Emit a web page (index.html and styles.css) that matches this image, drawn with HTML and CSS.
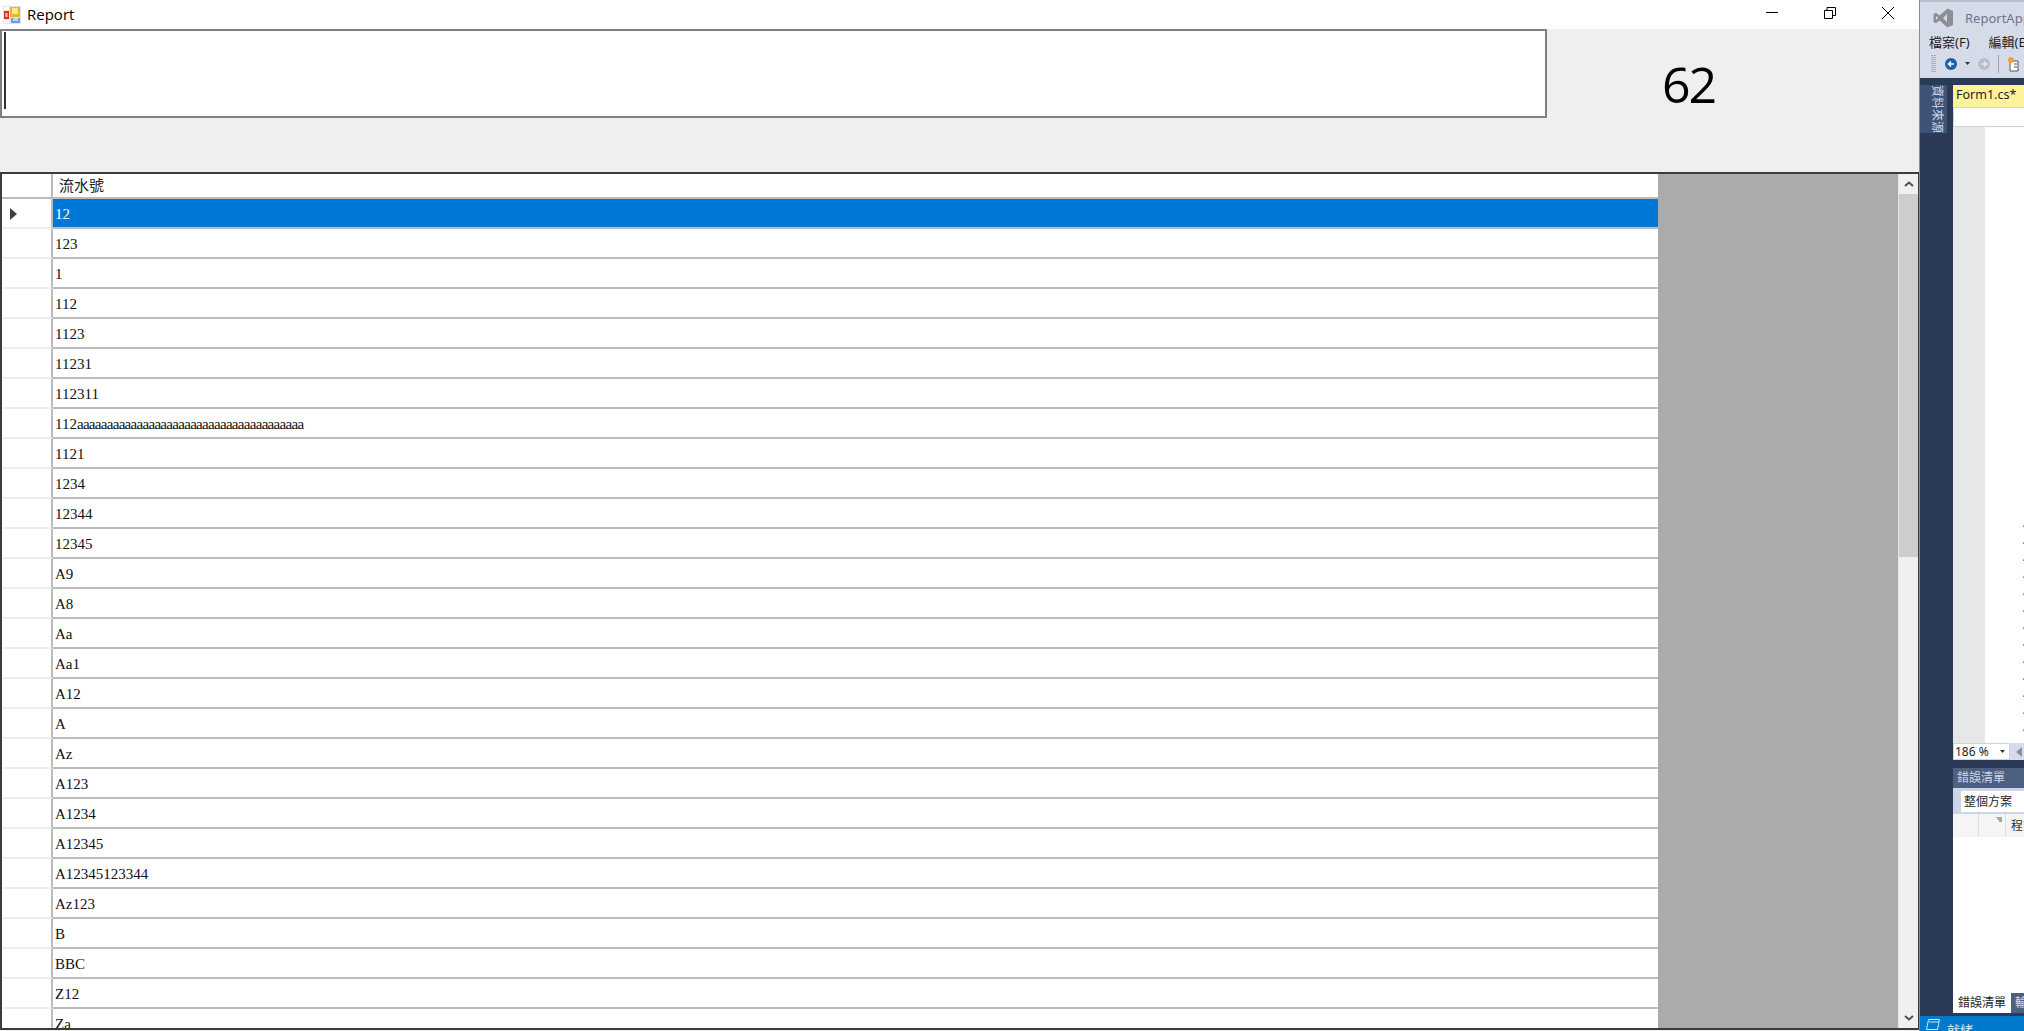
FILE: index.html
```html
<!DOCTYPE html>
<html lang="zh-Hant">
<head>
<meta charset="utf-8">
<title>Report</title>
<link rel="stylesheet" href="styles.css">
</head>
<body>
<div class="form">
  <header class="titlebar">
    <svg class="appicon" viewBox="0 0 18 18" width="18" height="18">
      <rect width="18" height="18" fill="#e4e4e4"/>
      <rect x="1" y="1" width="5" height="3" fill="#fff"/>
      <rect x="1" y="5" width="5" height="8" fill="#d8312c"/>
      <rect x="2.5" y="7" width="2" height="4" fill="#f6c9c0"/>
      <rect x="1" y="14" width="2" height="3" fill="#fff"/>
      <rect x="4" y="14" width="2" height="3" fill="#fff"/>
      <rect x="7" y="1" width="10" height="10" fill="#f0b323"/>
      <rect x="9" y="2" width="6" height="6" fill="#fbe58a"/>
      <rect x="8" y="12" width="9" height="5" fill="#6f9fe0"/>
      <rect x="10" y="12" width="5" height="3" fill="#bcd4f4"/>
    </svg>
    <span class="title">Report</span>
    <div class="winbtns">
      <svg viewBox="0 0 12 12" width="12" height="12"><path d="M0 5.5h12" stroke="#000" fill="none"/></svg>
      <svg viewBox="0 0 12 12" width="12" height="12"><path d="M0.5 3.5h8v8h-8zM3 3.5V0.5h8.5v8H8.5" stroke="#000" fill="none"/></svg>
      <svg viewBox="0 0 12 12" width="12" height="12"><path d="M0 0l12 12M12 0L0 12" stroke="#000" fill="none"/></svg>
    </div>
  </header>
  <section class="top">
    <div class="textbox"><span class="caret"></span></div>
    <div class="count">62</div>
  </section>
  <section class="grid">
    <div class="table">
      <div class="row head">
        <div class="rowhead"></div>
        <div class="cell headcell">流水號</div>
      </div>
      <div class="row selected">
        <div class="rowhead"><svg class="current" viewBox="0 0 7 12" width="7" height="12"><path d="M0 0l7 6-7 6z" fill="#404040"/></svg></div>
        <div class="cell">12</div>
      </div>
      <div class="row"><div class="rowhead"></div><div class="cell">123</div></div>
      <div class="row"><div class="rowhead"></div><div class="cell">1</div></div>
      <div class="row"><div class="rowhead"></div><div class="cell">112</div></div>
      <div class="row"><div class="rowhead"></div><div class="cell">1123</div></div>
      <div class="row"><div class="rowhead"></div><div class="cell">11231</div></div>
      <div class="row"><div class="rowhead"></div><div class="cell">112311</div></div>
      <div class="row"><div class="rowhead"></div><div class="cell">112<span class="tight">aaaaaaaaaaaaaaaaaaaaaaaaaaaaaaaaaaaaaa</span></div></div>
      <div class="row"><div class="rowhead"></div><div class="cell">1121</div></div>
      <div class="row"><div class="rowhead"></div><div class="cell">1234</div></div>
      <div class="row"><div class="rowhead"></div><div class="cell">12344</div></div>
      <div class="row"><div class="rowhead"></div><div class="cell">12345</div></div>
      <div class="row"><div class="rowhead"></div><div class="cell">A9</div></div>
      <div class="row"><div class="rowhead"></div><div class="cell">A8</div></div>
      <div class="row"><div class="rowhead"></div><div class="cell">Aa</div></div>
      <div class="row"><div class="rowhead"></div><div class="cell">Aa1</div></div>
      <div class="row"><div class="rowhead"></div><div class="cell">A12</div></div>
      <div class="row"><div class="rowhead"></div><div class="cell">A</div></div>
      <div class="row"><div class="rowhead"></div><div class="cell">Az</div></div>
      <div class="row"><div class="rowhead"></div><div class="cell">A123</div></div>
      <div class="row"><div class="rowhead"></div><div class="cell">A1234</div></div>
      <div class="row"><div class="rowhead"></div><div class="cell">A12345</div></div>
      <div class="row"><div class="rowhead"></div><div class="cell">A12345123344</div></div>
      <div class="row"><div class="rowhead"></div><div class="cell">Az123</div></div>
      <div class="row"><div class="rowhead"></div><div class="cell">B</div></div>
      <div class="row"><div class="rowhead"></div><div class="cell">BBC</div></div>
      <div class="row"><div class="rowhead"></div><div class="cell">Z12</div></div>
      <div class="row"><div class="rowhead"></div><div class="cell">Za</div></div>
    </div>
    <div class="empty"></div>
    <div class="vscroll">
      <div class="sbtn"><svg viewBox="0 0 10 6" width="10" height="6"><path d="M1 5l4-3.5L9 5" stroke="#505050" stroke-width="2" fill="none"/></svg></div>
      <div class="thumb"></div>
      <div class="track"></div>
      <div class="sbtn"><svg viewBox="0 0 10 6" width="10" height="6"><path d="M1 1l4 3.5L9 1" stroke="#505050" stroke-width="2" fill="none"/></svg></div>
    </div>
  </section>
</div>
<aside class="vs">
  <div class="vstop">
    <div class="vstitle">
      <svg class="vslogo" viewBox="0 0 20 20" width="20" height="20">
        <path d="M14.5 0.5L20 3v14l-5.500 2.500-8-7L3 15.300 0.500 14V6L3 4.700l3.500 2.800zM3 8v4l2-2zM14 6l-4 4 4 4z" fill="#8d8f97"/>
      </svg>
      <span class="vsname">ReportApp</span>
    </div>
    <div class="vsmenu"><span>檔案(F)</span><span>編輯(E)</span></div>
    <div class="vstools">
      <span class="grip"></span>
      <svg viewBox="0 0 12 12" width="12" height="12"><circle cx="6" cy="6" r="6" fill="#1c5fa8"/><path d="M9 6H4M6 3.500L3.500 6 6 8.500" stroke="#fff" stroke-width="1.600" fill="none"/></svg>
      <svg viewBox="0 0 5 3" width="5" height="3"><path d="M0 0h5L2.500 3z" fill="#333"/></svg>
      <svg viewBox="0 0 12 12" width="12" height="12"><circle cx="6" cy="6" r="6" fill="#b9bec6"/><path d="M3 6h5M6 3.500L8.500 6 6 8.500" stroke="#e6e8ee" stroke-width="1.600" fill="none"/></svg>
      <span class="sep"></span>
      <svg viewBox="0 0 14 16" width="14" height="16"><path d="M3 5h8v10H3z" fill="#fff" stroke="#555"/><circle cx="4" cy="4" r="3" fill="#e8a33a"/><path d="M7 8h3M7 11h3" stroke="#555"/></svg>
    </div>
  </div>
  <div class="vsbody">
    <div class="toolstrip"><div class="vtab">資料來源</div></div>
    <div class="vsmain">
      <div class="doctab">Form1.cs*</div>
      <div class="navbar"></div>
      <div class="editor">
        <div class="gutter"></div>
        <div class="code">
          <div class="lines">
            <span>4</span><span>4</span><span>4</span><span>4</span><span>4</span><span>4</span><span>4</span><span>4</span><span>4</span><span>4</span><span>4</span><span>4</span><span>4</span>
          </div>
        </div>
      </div>
      <div class="zoombar">
        <div class="zoombox"><span>186 %</span><svg viewBox="0 0 5 3" width="5" height="3"><path d="M0 0h5L2.500 3z" fill="#333"/></svg></div>
        <svg class="hleft" viewBox="0 0 6 10" width="6" height="10"><path d="M6 0v10L0 5z" fill="#8a8f99"/></svg>
      </div>
      <div class="errpanel">
        <div class="errhead">錯誤清單</div>
        <div class="errfilter"><div class="errinput">整個方案</div></div>
        <div class="errcols">
          <div class="col1"></div>
          <div class="col2"><svg viewBox="0 0 6 5" width="6" height="5"><path d="M0 0h6M1.500 2h4.500M3 4h3" stroke="#555" fill="none"/></svg></div>
          <div class="col3">程式碼</div>
        </div>
        <div class="errlist"></div>
        <div class="errtabs"><div class="tabon">錯誤清單</div><div class="taboff">輸出</div></div>
      </div>
    </div>
  </div>
  <footer class="status">
    <svg viewBox="0 0 14 11" width="14" height="11"><path d="M2.500 0.500h11l-2 10h-11zM3 3h10" stroke="#cfe6f7" fill="none"/></svg>
    <span>就緒</span>
  </footer>
</aside>
</body>
</html>
```
FILE: styles.css
```css
* { box-sizing: border-box; }
html, body { margin: 0; height: 1031px; overflow: hidden; }
body { display: flex; width: 2024px; background: #efefef; font-family: "Noto Sans", "Noto Sans CJK TC", sans-serif; }

.form { width: 1920px; height: 1031px; display: flex; flex-direction: column; flex: none; background: #efefef; border-right: 1px solid #8c8c8c; padding-bottom: 1px; }
.titlebar { height: 29px; flex: none; background: #fff; display: flex; align-items: center; padding-left: 3px; }
.appicon { flex: none; }
.title { margin-left: 6px; font-size: 15px; line-height: 29px; color: #000; font-family: "Open Sans", sans-serif; }
.winbtns { margin-left: auto; display: flex; gap: 46px; margin-right: 25px; align-items: center; height: 29px; padding-bottom: 3px; }

.top { height: 143px; flex: none; display: flex; align-items: flex-start; }
.textbox { width: 1547px; height: 89px; background: #fff; border: 2px solid #808080; padding: 1px 2px; }
.caret { display: block; width: 2px; height: 77px; background: #333; }
.count { margin-left: 115px; margin-top: 20px; font-family: "Open Sans", sans-serif; font-size: 50px; line-height: 70px; letter-spacing: -2px; color: #000; }

.grid { flex: 1; min-height: 0; display: flex; overflow: hidden; border: 2px solid #3c3c3c; border-right-width: 1px; background: #ababab; }
.table { width: 1656px; flex: none; background: #fff; }
.row { display: flex; height: 30px; font-family: "Liberation Serif", "Noto Serif CJK TC", serif; font-size: 15px; color: #111; }
.row.head { height: 25px; }
.rowhead { width: 51px; flex: none; border-bottom: 2px solid #eeeeee; border-right: 2px solid #bcbcbc; background: #fff; display: flex; align-items: center; padding-left: 8px; }
.current { margin-top: 2px; }
.cell { flex: 1; border-bottom: 2px solid #bcbcbc; padding: 4px 0 0 2px; line-height: 22px; white-space: nowrap; background: #fff; }
.tight { letter-spacing: -0.7px; }
.head .rowhead { border-bottom-color: #bcbcbc; }
.headcell { font-family: "Noto Sans CJK TC", sans-serif; font-size: 15px; padding: 0 0 0 6px; line-height: 22px; color: #222; }
.selected .cell { background: #0078d7; color: #fff; }

.empty { flex: 1; background: #ababab; }
.vscroll { width: 20px; flex: none; display: flex; flex-direction: column; background: #f0f0f0; border-left: 1px solid #e6e6e6; }
.sbtn { height: 20px; flex: none; display: flex; align-items: center; justify-content: center; }
.thumb { height: 363px; flex: none; background: #cdcdcd; }
.track { flex: 1; }

.vs { flex: 1; height: 1031px; display: flex; flex-direction: column; background: #2a3a57; overflow: hidden; }
.vstop { height: 78px; flex: none; background: #d6dbe9; border-top: 2px solid #b9bfce; }
.vstitle { height: 32px; display: flex; align-items: center; padding-left: 13px; }
.vslogo { flex: none; }
.vsname { margin-left: 12px; font-size: 13px; color: #6d7587; white-space: nowrap; }
.vsmenu { height: 17px; display: flex; gap: 19px; padding-left: 9px; font-size: 13px; line-height: 17px; color: #1e1e1e; white-space: nowrap; }
.vstools { height: 25px; display: flex; align-items: center; gap: 8px; padding-left: 11px; white-space: nowrap; }
.vstools svg { flex: none; }
.grip { width: 5px; height: 18px; margin-right: 1px; flex: none; background: repeating-linear-gradient(#aab0c0 0 1px, #d6dbe9 1px 2px); }
.sep { width: 1px; height: 18px; background: #9aa3b8; flex: none; }

.vsbody { flex: 1; min-height: 0; display: flex; }
.toolstrip { width: 32px; flex: none; padding-top: 7px; }
.vtab { width: 27px; height: 48px; background: #3e5377; padding-left: 6px; writing-mode: vertical-rl; text-orientation: sideways; font-size: 12px; line-height: 20px; color: #d6dbe9; white-space: nowrap; }
.vsmain { flex: 1; display: flex; flex-direction: column; width: 72px; padding-top: 7px; padding-left: 1px; }
.doctab { height: 22px; flex: none; background: #fff29d; padding-left: 3px; font-size: 12.500px; line-height: 20px; color: #1e1e1e; white-space: nowrap; }
.navbar { height: 20px; flex: none; background: #fff; border: 1px solid #ccd3e2; border-right: 0; }
.editor { height: 616px; flex: none; display: flex; background: #fff; }
.gutter { width: 32px; flex: none; background: #e6e7e8; }
.code { flex: 1; display: flex; flex-direction: column; justify-content: flex-end; overflow: hidden; padding-bottom: 6px; }
.lines { display: flex; flex-direction: column; align-items: flex-end; font-size: 11px; line-height: 17px; color: #2b91af; margin-right: -5px; }
.zoombar { height: 17px; flex: none; display: flex; align-items: center; background: #d6dbe9; }
.zoombox { width: 57px; height: 17px; background: #fff; border: 1px solid #ccd3e2; padding: 0 4px 0 1px; font-size: 12px; line-height: 15px; display: flex; align-items: center; justify-content: space-between; color: #1e1e1e; white-space: nowrap; }
.hleft { margin-left: 6px; flex: none; }
.errpanel { margin-top: 8px; height: 245px; flex: none; display: flex; flex-direction: column; background: #fff; }
.errhead { height: 20px; flex: none; background: #4d6082; padding-left: 4px; font-size: 12px; line-height: 20px; color: #cfd6e5; white-space: nowrap; }
.errfilter { height: 26px; flex: none; background: #ccd5e6; padding: 3px 0 2px 8px; }
.errinput { height: 21px; background: #fff; padding-left: 3px; font-size: 12px; line-height: 21px; color: #1e1e1e; white-space: nowrap; }
.errcols { height: 23px; flex: none; display: flex; background: #f5f5f5; font-size: 12px; line-height: 23px; color: #333; white-space: nowrap; overflow: hidden; }
.col1 { width: 26px; flex: none; border-right: 1px solid #dcdcdc; }
.col2 { width: 27px; flex: none; border-right: 1px solid #dcdcdc; display: flex; justify-content: flex-end; align-items: flex-start; padding: 3px 3px 0 0; }
.col3 { padding-left: 5px; }
.errlist { flex: 1; background: #fff; }
.errtabs { height: 20px; flex: none; display: flex; background: #2a3a57; font-size: 12px; line-height: 20px; white-space: nowrap; overflow: hidden; }
.tabon { width: 58px; flex: none; background: #fff; color: #1e1e1e; padding-left: 5px; }
.taboff { flex: 1; background: #4d6082; color: #d6dbe9; padding-left: 4px; }
.status { height: 15px; flex: none; margin-top: 4px; background: #007acc; display: flex; align-items: flex-start; padding: 3px 0 0 6px; gap: 7px; font-size: 13px; line-height: 22px; color: #d8ecfa; overflow: hidden; }
.status svg { flex: none; }
.status span { white-space: nowrap; }
```
